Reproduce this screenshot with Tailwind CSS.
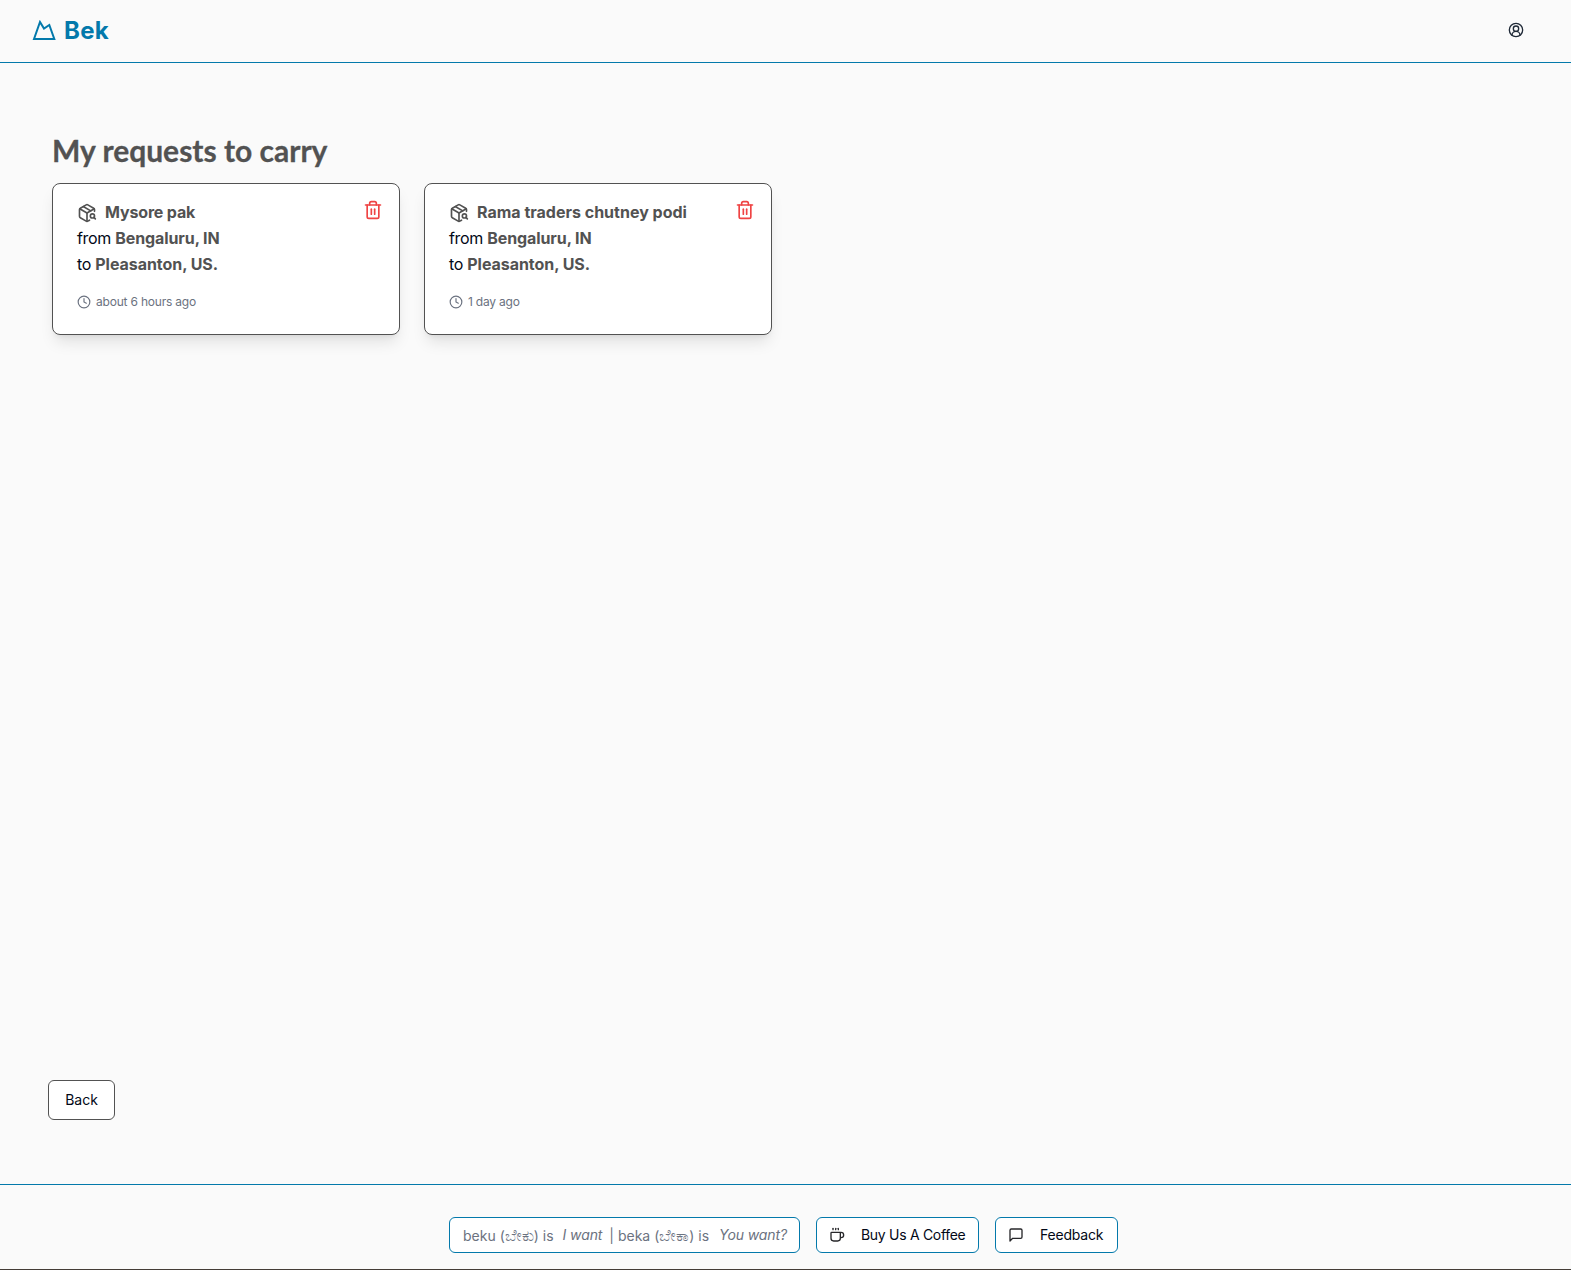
<!DOCTYPE html>
<html lang="en">
<head>
  <meta charset="UTF-8" />
  <title>Bek</title>
  <script src="https://cdn.jsdelivr.net/npm/@tailwindcss/browser@4"></script>
</head>
<body class="bg-[#fafafa] font-['Inter',sans-serif] text-[#020817]">
  <div class="flex flex-col h-[1270px] border-b border-[#443c36]">
    <!-- Header -->
    <header class="flex items-center justify-between h-[63px] shrink-0 border-b border-[#0379ab] pl-[32px] pr-[47px] pb-[1px]">
      <a href="#" class="flex items-center gap-[8px] text-[#0379ab]">
        <svg width="24" height="22" viewBox="0 0 24 22" fill="none" stroke="currentColor" stroke-width="2"><path d="M2 19 L8 2 L12 8.5 L17.3 5 L22.3 19 Z"/></svg>
        <span class="text-2xl font-bold tracking-[0.3px]">Bek</span>
      </a>
      <svg class="-mt-[1px]" width="16" height="16" viewBox="0 0 24 24" fill="none" stroke="#1f2937" stroke-width="2" stroke-linecap="round" stroke-linejoin="round"><path d="M18 20a6 6 0 0 0-12 0"/><circle cx="12" cy="10" r="4"/><circle cx="12" cy="12" r="10"/></svg>
    </header>

    <!-- Main -->
    <main class="flex-1 flex flex-col pl-[48px] pr-[48px]">
      <div class="flex-1 pl-[4px] pt-[67px]">
        <h1 class="font-['Lato',sans-serif] text-[30px] leading-[40px] font-bold text-[#525252] mb-[13px] [-webkit-text-stroke:0.3px_#525252]">My requests to carry</h1>
        <div class="flex gap-[24px]">
          <!-- Card 1 -->
          <div class="relative w-[348px] h-[152px] bg-white border border-[#525252] rounded-lg shadow-lg pl-[24px] pt-[15px]">
            <div class="flex items-center h-[26px] text-[#525252] font-bold text-base">
              <svg class="mr-[8px] mt-[2px]" width="20" height="20" viewBox="0 0 24 24" fill="none" stroke="#525252" stroke-width="2" stroke-linecap="round" stroke-linejoin="round"><path d="M21 10V8a2 2 0 0 0-1-1.73l-7-4a2 2 0 0 0-2 0l-7 4A2 2 0 0 0 3 8v8a2 2 0 0 0 1 1.73l7 4a2 2 0 0 0 2 0l2-1.14"/><path d="m7.5 4.27 9 5.15"/><polyline points="3.29 7 12 12 20.71 7"/><line x1="12" x2="12" y1="22" y2="12"/><circle cx="18.5" cy="15.5" r="2.5"/><path d="M20.27 17.27 22 19"/></svg>
              <span class="tracking-[-0.15px]">Mysore pak</span>
            </div>
            <p class="h-[26px] leading-[26px] tracking-[-0.3px]">from <span class="font-bold text-[#525252] tracking-[-0.1px]">Bengaluru, IN</span></p>
            <p class="h-[26px] leading-[26px] tracking-[-0.3px]">to <span class="font-bold text-[#525252] tracking-[-0.05px]">Pleasanton, US.</span></p>
            <div class="flex items-center gap-[5px] mt-[17px] text-xs text-[#6b7280] tracking-[-0.2px]">
              <svg width="14" height="14" viewBox="0 0 24 24" fill="none" stroke="currentColor" stroke-width="2" stroke-linecap="round" stroke-linejoin="round"><circle cx="12" cy="12" r="10"/><polyline points="12 6 12 12 16 14"/></svg>
              <span>about 6 hours ago</span>
            </div>
            <svg class="absolute top-[16px] right-[16px]" width="20" height="20" viewBox="0 0 24 24" fill="none" stroke="#ef4444" stroke-width="2" stroke-linecap="round" stroke-linejoin="round"><path d="M3 6h18"/><path d="M19 6v14c0 1-1 2-2 2H7c-1 0-2-1-2-2V6"/><path d="M8 6V4c0-1 1-2 2-2h4c1 0 2 1 2 2v2"/><line x1="10" x2="10" y1="11" y2="17"/><line x1="14" x2="14" y1="11" y2="17"/></svg>
          </div>
          <!-- Card 2 -->
          <div class="relative w-[348px] h-[152px] bg-white border border-[#525252] rounded-lg shadow-lg pl-[24px] pt-[15px]">
            <div class="flex items-center h-[26px] text-[#525252] font-bold text-base">
              <svg class="mr-[8px] mt-[2px]" width="20" height="20" viewBox="0 0 24 24" fill="none" stroke="#525252" stroke-width="2" stroke-linecap="round" stroke-linejoin="round"><path d="M21 10V8a2 2 0 0 0-1-1.73l-7-4a2 2 0 0 0-2 0l-7 4A2 2 0 0 0 3 8v8a2 2 0 0 0 1 1.73l7 4a2 2 0 0 0 2 0l2-1.14"/><path d="m7.5 4.27 9 5.15"/><polyline points="3.29 7 12 12 20.71 7"/><line x1="12" x2="12" y1="22" y2="12"/><circle cx="18.5" cy="15.5" r="2.5"/><path d="M20.27 17.27 22 19"/></svg>
              <span>Rama traders chutney podi</span>
            </div>
            <p class="h-[26px] leading-[26px] tracking-[-0.3px]">from <span class="font-bold text-[#525252] tracking-[-0.1px]">Bengaluru, IN</span></p>
            <p class="h-[26px] leading-[26px] tracking-[-0.3px]">to <span class="font-bold text-[#525252] tracking-[-0.05px]">Pleasanton, US.</span></p>
            <div class="flex items-center gap-[5px] mt-[17px] text-xs text-[#6b7280] tracking-[-0.2px]">
              <svg width="14" height="14" viewBox="0 0 24 24" fill="none" stroke="currentColor" stroke-width="2" stroke-linecap="round" stroke-linejoin="round"><circle cx="12" cy="12" r="10"/><polyline points="12 6 12 12 16 14"/></svg>
              <span>1 day ago</span>
            </div>
            <svg class="absolute top-[16px] right-[16px]" width="20" height="20" viewBox="0 0 24 24" fill="none" stroke="#ef4444" stroke-width="2" stroke-linecap="round" stroke-linejoin="round"><path d="M3 6h18"/><path d="M19 6v14c0 1-1 2-2 2H7c-1 0-2-1-2-2V6"/><path d="M8 6V4c0-1 1-2 2-2h4c1 0 2 1 2 2v2"/><line x1="10" x2="10" y1="11" y2="17"/><line x1="14" x2="14" y1="11" y2="17"/></svg>
          </div>
        </div>
      </div>
      <div class="pb-[64px]">
        <button class="h-[40px] w-[67px] bg-white border border-[#525252] rounded-md text-sm">Back</button>
      </div>
    </main>

    <!-- Footer -->
    <footer class="flex items-start justify-center gap-[16px] h-[85px] shrink-0 border-t border-[#0379ab] text-sm pt-[32px] pr-[4px]">
      <div class="flex items-center h-[36px] w-[351px] px-[13px] bg-white border border-[#0379ab] rounded-md text-[#6b7280] whitespace-nowrap">
        <span>beku (<span class="text-base">ಬೇಕು</span>) is</span>
        <em class="ml-[9px] tracking-[-0.1px]">I want</em>
        <span class="ml-[7px]">| beka (<span class="text-base">ಬೇಕಾ</span>) is</span>
        <em class="ml-[10px] tracking-[-0.1px]">You want?</em>
      </div>
      <button class="flex items-center h-[36px] w-[163px] pl-[12px] gap-[16px] bg-white border border-[#0379ab] rounded-md tracking-[-0.3px]">
        <svg width="16" height="16" viewBox="0 0 24 24" fill="none" stroke="#27272a" stroke-width="2" stroke-linecap="round" stroke-linejoin="round"><path d="M10 2v2"/><path d="M14 2v2"/><path d="M16 8a1 1 0 0 1 1 1v8a4 4 0 0 1-4 4H7a4 4 0 0 1-4-4V9a1 1 0 0 1 1-1h14a4 4 0 1 1 0 8h-1"/><path d="M6 2v2"/></svg>
        <span>Buy Us A Coffee</span>
      </button>
      <button class="flex items-center h-[36px] w-[123px] pl-[12px] gap-[16px] bg-white border border-[#0379ab] rounded-md tracking-[-0.2px]">
        <svg width="16" height="16" viewBox="0 0 24 24" fill="none" stroke="#27272a" stroke-width="2" stroke-linecap="round" stroke-linejoin="round"><path d="M21 15a2 2 0 0 1-2 2H7l-4 4V5a2 2 0 0 1 2-2h14a2 2 0 0 1 2 2z"/></svg>
        <span>Feedback</span>
      </button>
    </footer>
  </div>
</body>
</html>
